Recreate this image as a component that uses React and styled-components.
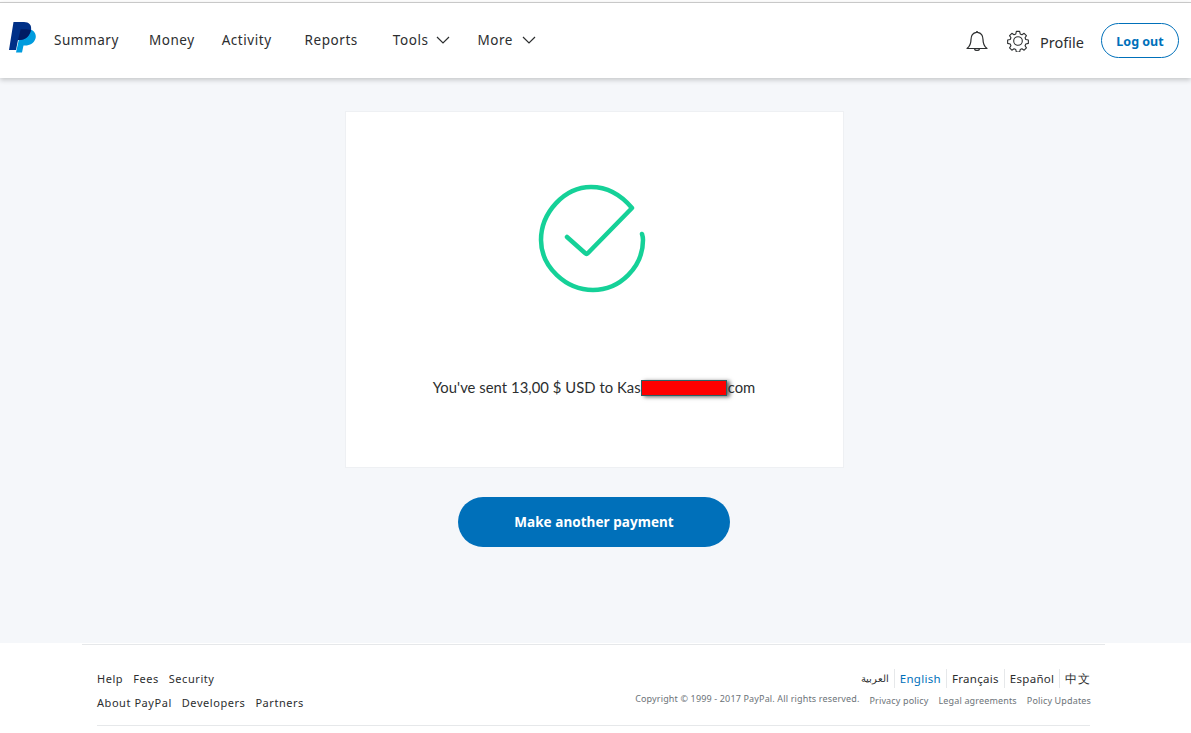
import styled, { createGlobalStyle } from "styled-components";

const GlobalStyle = createGlobalStyle`
  html, body {
    margin: 0;
    padding: 0;
    background: #fff;
  }
  body {
    font-family: "Noto Sans", "Open Sans", sans-serif;
    color: #2c2e2f;
  }
  * {
    box-sizing: border-box;
  }
`;

const Page = styled.div`
  display: flex;
  flex-direction: column;
  height: 733px;
  overflow: hidden;
  padding-top: 2px;
`;

const Header = styled.header`
  position: relative;
  z-index: 2;
  flex: none;
  display: flex;
  align-items: center;
  height: 76px;
  padding: 0 12px 0 9px;
  background: #fff;
  border-top: 1px solid #c8c8c8;
  box-shadow: 0 2px 5px rgba(0, 0, 0, 0.2);
`;

const Logo = styled.svg`
  flex: none;
  width: 27px;
  height: 31px;
  margin-top: -6px;
`;

const Nav = styled.nav`
  display: flex;
  align-items: center;
  margin: -2px 0 0 18px;
`;

const NavLink = styled.a`
  display: flex;
  align-items: center;
  gap: ${(props) => props.$gap || 0}px;
  margin-right: ${(props) => props.$right}px;
  font-size: 13.5px;
  letter-spacing: 0.55px;
  color: #2c2e2f;
  white-space: nowrap;
`;

const Tools = styled.div`
  display: flex;
  align-items: center;
  margin-left: auto;
`;

const IconButton = styled.svg`
  width: ${(props) => props.$size}px;
  height: ${(props) => props.$size}px;
  margin-right: ${(props) => props.$right}px;
  fill: none;
  stroke: #2c2e2f;
  stroke-width: 1.2;
  stroke-linejoin: round;
  stroke-linecap: round;
`;

const ProfileLink = styled.a`
  margin: 3px 17px 0 0;
  font-size: 14.5px;
  color: #2c2e2f;
`;

const LogOut = styled.a`
  display: flex;
  align-items: center;
  justify-content: center;
  width: 78px;
  height: 35px;
  padding-top: 1px;
  border: 1px solid #0070ba;
  border-radius: 18px;
  font-size: 12.5px;
  font-weight: 700;
  color: #0070ba;
`;

const Main = styled.main`
  flex: none;
  display: flex;
  flex-direction: column;
  align-items: center;
  height: 565px;
  padding: 33px 3px 0 0;
  background: #f5f7fa;
`;

const Card = styled.section`
  display: flex;
  flex-direction: column;
  align-items: center;
  width: 499px;
  height: 357px;
  padding-top: 72px;
  background: #fff;
  border: 1px solid #eef0f3;
`;

const SuccessIcon = styled.svg`
  width: 110px;
  height: 110px;
  margin-right: 5px;
  fill: none;
  stroke: #15d198;
  stroke-width: 4.500;
  stroke-linecap: round;
  stroke-linejoin: round;
`;

const Message = styled.p`
  margin: 83px 0 0;
  font-family: "Lato", "Open Sans", sans-serif;
  font-size: 14.800px;
  line-height: 20px;
  letter-spacing: 0.05px;
  color: #2c2e2f;
  white-space: nowrap;
`;

const Redacted = styled.span`
  display: inline-block;
  width: 86px;
  height: 16px;
  margin-right: 1px;
  vertical-align: -3px;
  background: #ff0000;
  border: 1px solid #2a6266;
  box-shadow: 3px 1px 4px rgba(0, 0, 0, 0.6);
`;

const PrimaryButton = styled.button`
  width: 272px;
  height: 50px;
  margin-top: 29px;
  border: 0;
  border-radius: 25px;
  background: #0070ba;
  color: #fff;
  font-family: "Noto Sans", sans-serif;
  font-size: 13.5px;
  font-weight: 700;
  letter-spacing: 0.05px;
`;

const Footer = styled.footer`
  flex: 1;
  padding: 1px 86px 0 82px;
  background: #fff;
`;

const FooterInner = styled.div`
  border-top: 1px solid #e6e8ea;
  padding: 0 15px 0 15px;
`;

const FooterBody = styled.div`
  display: flex;
  justify-content: space-between;
  height: 81px;
  padding-top: 26px;
  border-bottom: 1px solid #e6e8ea;
`;

const LinkColumn = styled.div`
  display: flex;
  flex-direction: column;
  gap: 8px;
`;

const LinkRow = styled.div`
  display: flex;
  gap: 10px;
  font-size: 11px;
  line-height: 16px;
  letter-spacing: 0.55px;
  color: #2c2e2f;
`;

const LegalColumn = styled.div`
  display: flex;
  flex-direction: column;
  align-items: flex-end;
  margin-top: -2px;
`;

const Languages = styled.ul`
  display: flex;
  margin: 0;
  padding: 0;
  list-style: none;
`;

const Language = styled.li`
  height: 19px;
  padding: 0 5px;
  border-left: ${(props) => (props.$first ? "0" : "1px solid #e6e8ea")};
  font-size: ${(props) => (props.$first ? 10 : 11.5)}px;
  line-height: 19px;
  letter-spacing: 0.3px;
  color: ${(props) => (props.$active ? "#0070ba" : "#2c2e2f")};

  &:last-child {
    padding-right: 0;
  }
`;

const LegalRow = styled.div`
  display: flex;
  align-items: flex-start;
  gap: 10px;
  margin: 5px -1px 0 0;
  font-size: 9px;
  line-height: 13px;
  letter-spacing: 0.15px;
  color: #6c7378;
`;

const Copyright = styled.span`
  margin-top: -1px;
`;

const LegalLink = styled.a`
  margin-top: 1px;
`;

function Chevron() {
  return (
    <svg width="14" height="8" viewBox="0 0 14 8" fill="none" stroke="#2c2e2f" strokeWidth="1.2">
      <path d="M1 1l6 6 6-6" />
    </svg>
  );
}

export default function App() {
  return (
    <>
      <GlobalStyle />
      <Page>
        <Header>
          <Logo viewBox="0 0 27 31">
            <path fill="#009cde" d="M21 7c5 2 6.500 6 5.500 9.500-1.300 4.500-5.500 7-10.500 7h-1.500L13 30.500H7l1-4.500 4-18z" />
            <path fill="#003087" d="M4.500 0H15c5 0 8 3 7 8-1 6-5.500 10-11.500 10H9L7 28H0z" />
            <path fill="#001c64" d="M11.700 7.300c4-.3 7.500-.2 10.100.7-1 5.800-5.400 10-11.300 10H9z" />
          </Logo>
          <Nav>
            <NavLink $right={30}>Summary</NavLink>
            <NavLink $right={27}>Money</NavLink>
            <NavLink $right={33}>Activity</NavLink>
            <NavLink $right={35}>Reports</NavLink>
            <NavLink $right={27} $gap={8}>Tools <Chevron /></NavLink>
            <NavLink $right={0} $gap={9}>More <Chevron /></NavLink>
          </Nav>
          <Tools>
            <IconButton $size={24} $right={18} viewBox="0 0 24 24">
              <path d="M12 2.500c-.3 0-.5.300-.5.800-3.800.6-5.500 3.400-5.500 7.200 0 4.600-1.300 7-4 9h20c-2.700-2-4-4.400-4-9 0-3.800-1.700-6.600-5.500-7.200 0-.5-.2-.8-.5-.8zM9.500 19.800c.3 2.200 4.700 2.200 5 0" />
            </IconButton>
            <IconButton $size={22} $right={11} viewBox="0 0 24 24">
              <circle cx="12" cy="12" r="4.700" />
              <path d="M10.200 1.500h3.600l.6 2.800 1.900.8 2.400-1.500 2.500 2.500-1.500 2.400.8 1.900 2.800.6v3.600l-2.800.6-.8 1.900 1.500 2.400-2.500 2.500-2.400-1.500-1.900.8-.6 2.800h-3.600l-.6-2.800-1.900-.8-2.400 1.500-2.500-2.500 1.500-2.400-.8-1.900-2.800-.6v-3.600l2.800-.6.8-1.900-1.500-2.400 2.500-2.500 2.400 1.500 1.900-.8z" />
            </IconButton>
            <ProfileLink>Profile</ProfileLink>
            <LogOut>Log out</LogOut>
          </Tools>
        </Header>
        <Main>
          <Card>
            <SuccessIcon viewBox="0 0 110 110">
              <path d="M105 50c1 3 1 4 1 6 0 27-23 50-50 50S4 83 4 56 27 3 54 3c17 0 31 9 41 21L51 69c-1 1-2 1-3 0L30 53" />
            </SuccessIcon>
            <Message>You've sent 13,00 $ USD to Kas<Redacted />com</Message>
          </Card>
          <PrimaryButton>Make another payment</PrimaryButton>
        </Main>
        <Footer>
          <FooterInner>
            <FooterBody>
              <LinkColumn>
                <LinkRow><a>Help</a><a>Fees</a><a>Security</a></LinkRow>
                <LinkRow><a>About PayPal</a><a>Developers</a><a>Partners</a></LinkRow>
              </LinkColumn>
              <LegalColumn>
                <Languages>
                  <Language $first>العربية</Language>
                  <Language $active>English</Language>
                  <Language>Français</Language>
                  <Language>Español</Language>
                  <Language>中文</Language>
                </Languages>
                <LegalRow>
                  <Copyright>Copyright © 1999 - 2017 PayPal. All rights reserved.</Copyright>
                  <LegalLink>Privacy policy</LegalLink>
                  <LegalLink>Legal agreements</LegalLink>
                  <LegalLink>Policy Updates</LegalLink>
                </LegalRow>
              </LegalColumn>
            </FooterBody>
          </FooterInner>
        </Footer>
      </Page>
    </>
  );
}
